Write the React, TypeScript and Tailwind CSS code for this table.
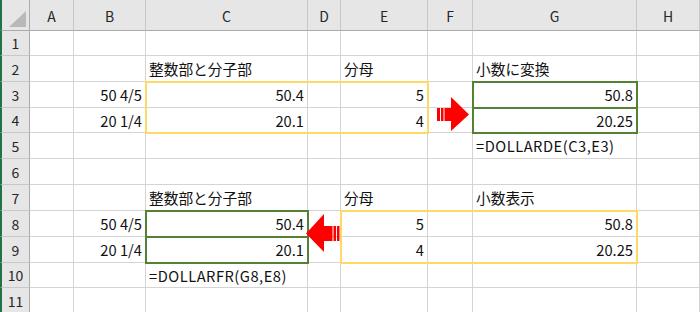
import React from "react";

const COL_START = ["col-start-1","col-start-2","col-start-3","col-start-4","col-start-5","col-start-6","col-start-7","col-start-8","col-start-9"];
const ROW_START = ["row-start-1","row-start-2","row-start-3","row-start-4","row-start-5","row-start-6","row-start-7","row-start-8","row-start-9","row-start-10","row-start-11","row-start-12"];

type Cell = { t: string; r?: boolean; f?: boolean };
// key: "row,col" where col 0 = A
const data: Record<string, Cell> = {
  "2,2": { t: "整数部と分子部" },
  "2,4": { t: "分母" },
  "2,6": { t: "小数に変換" },
  "3,1": { t: "50 4/5", r: true },
  "3,2": { t: "50.4", r: true },
  "3,4": { t: "5", r: true },
  "3,6": { t: "50.8", r: true },
  "4,1": { t: "20 1/4", r: true },
  "4,2": { t: "20.1", r: true },
  "4,4": { t: "4", r: true },
  "4,6": { t: "20.25", r: true },
  "5,6": { t: "=DOLLARDE(C3,E3)", f: true },
  "7,2": { t: "整数部と分子部" },
  "7,4": { t: "分母" },
  "7,6": { t: "小数表示" },
  "8,1": { t: "50 4/5", r: true },
  "8,2": { t: "50.4", r: true },
  "8,4": { t: "5", r: true },
  "8,6": { t: "50.8", r: true },
  "9,1": { t: "20 1/4", r: true },
  "9,2": { t: "20.1", r: true },
  "9,4": { t: "4", r: true },
  "9,6": { t: "20.25", r: true },
  "10,2": { t: "=DOLLARFR(G8,E8)", f: true },
};

const COLS = ["A", "B", "C", "D", "E", "F", "G", "H"];
const ROWS = [1, 2, 3, 4, 5, 6, 7, 8, 9, 10, 11];

export default function App() {
  const cells: React.ReactNode[] = [];
  cells.push(
    <div
      key="corner"
      className="col-start-1 row-start-1 bg-[#e6e6e6] border-r border-b border-[#ababab] border-l-2 border-l-[#217346] relative"
    >
      <svg width="28" height="30" className="block">
        <polygon points="7,27 24,27 24,11" fill="#b9b9b9" />
      </svg>
    </div>
  );
  COLS.forEach((c, i) => {
    cells.push(
      <div
        key={"h" + c}
        className={`${COL_START[i + 1]} row-start-1 bg-[#e6e6e6] border-b border-b-[#ababab] border-r border-r-[#c8c8c8] flex items-center justify-center text-[14px] text-[#262626] pt-[2px]`}
      >
        {c}
      </div>
    );
  });
  ROWS.forEach((r) => {
    cells.push(
      <div
        key={"r" + r}
        className={`col-start-1 ${ROW_START[r]} bg-[#e6e6e6] border-l-2 border-l-[#217346] border-r border-r-[#ababab] border-b border-b-[#c8c8c8] flex items-center justify-center text-[14px] text-[#262626] pt-[1px]`}
      >
        {r}
      </div>
    );
    COLS.forEach((_, ci) => {
      const d = data[`${r},${ci}`];
      cells.push(
        <div
          key={`c${r}-${ci}`}
          className={`${COL_START[ci + 1]} ${ROW_START[r]} border-r border-b border-[#d4d4d4] flex items-center px-[3px] pt-[2px] whitespace-nowrap text-[14.7px] text-[#111] ${d?.r ? "justify-end" : "justify-start"} ${d?.f ? "tracking-[0.5px]" : ""}`}
        >
          {d?.t ?? ""}
        </div>
      );
    });
  });

  return (
    <div className="w-[700px] h-[312px] overflow-hidden bg-white" style={{ fontFamily: '"Noto Sans CJK JP", "Noto Sans", sans-serif' }}>
      <div className="grid grid-cols-[30px_44px_72px_162px_33px_87px_45px_164px_63px] grid-rows-[31px_25px_26px_26px_25px_26px_26px_26px_26px_26px_25px_26px]">
        {cells}
        {/* Top yellow box C3:E4 */}
        <div className="col-start-4 col-end-7 row-start-4 row-end-6 -m-[1px] border-2 border-[#ffd966]" />
        {/* Top green boxes G3, G4 */}
        <div className="col-start-8 col-end-9 row-start-4 row-end-5 -m-[1px] border-2 border-[#548235]" />
        <div className="col-start-8 col-end-9 row-start-5 row-end-6 -m-[1px] border-2 border-[#548235]" />
        {/* Bottom yellow box E8:G9 */}
        <div className="col-start-6 col-end-9 row-start-9 row-end-11 -m-[1px] border-2 border-[#ffd966]" />
        {/* Bottom green boxes C8, C9 */}
        <div className="col-start-4 col-end-5 row-start-9 row-end-10 -m-[1px] border-2 border-[#548235]" />
        <div className="col-start-4 col-end-5 row-start-10 row-end-11 -m-[1px] border-2 border-[#548235]" />
        {/* Right arrow in F3:F4 */}
        <div className="col-start-7 row-start-4 row-end-6">
          <svg width="45" height="51" className="block overflow-visible">
            <rect x="9" y="26" width="3" height="13" fill="#ff0000" />
            <rect x="13" y="26" width="2.5" height="13" fill="#ff0000" />
            <rect x="16.5" y="26" width="7" height="13" fill="#ff0000" />
            <polygon points="23,15 41,32.5 23,49" fill="#ff0000" />
          </svg>
        </div>
        {/* Left arrow in D8:D9 */}
        <div className="col-start-5 row-start-9 row-end-11">
          <svg width="33" height="52" className="block overflow-visible">
            <polygon points="-2,22.5 16,3 16,41" fill="#ff0000" />
            <rect x="15.5" y="15" width="9" height="15" fill="#ff0000" />
            <rect x="25.5" y="15" width="2.5" height="15" fill="#ff0000" />
            <rect x="29" y="15" width="2.5" height="15" fill="#ff0000" />
          </svg>
        </div>
      </div>
    </div>
  );
}
